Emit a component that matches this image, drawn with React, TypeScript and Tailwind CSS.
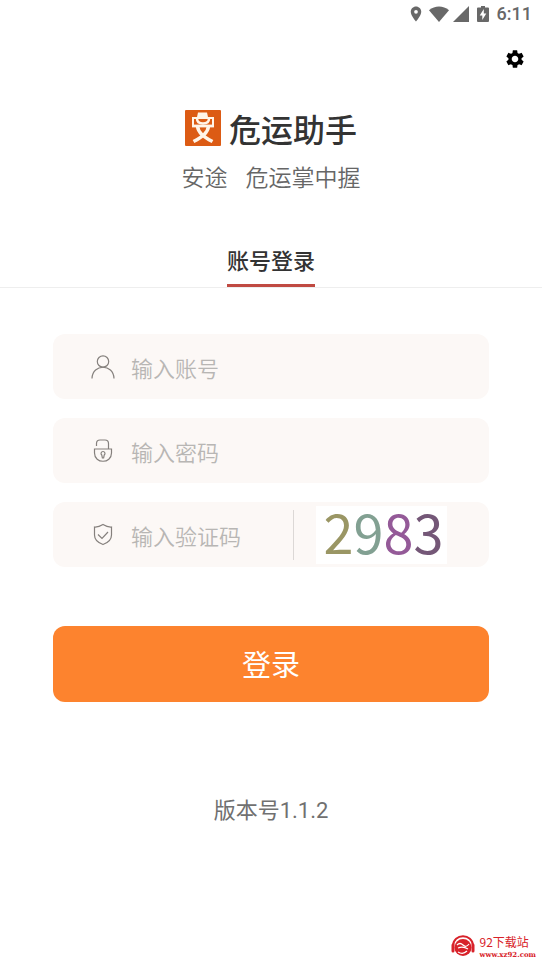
import { useState } from "react";
import type { ReactNode } from "react";
import { MdLocationOn, MdSettings } from "react-icons/md";

function StatusBar() {
  return (
    <div className="flex h-7 items-center justify-end pr-[10px] text-[#686868]">
      <MdLocationOn className="size-[18px]" aria-hidden="true" />
      <svg className="ml-1 h-4 w-5" viewBox="0 0 20 16" fill="currentColor" aria-hidden="true">
        <path d="M10 16 0 4.200C6 -.7 14 -.7 20 4.200Z" />
      </svg>
      <svg className="ml-1 size-4" viewBox="0 0 16 16" fill="currentColor" aria-hidden="true">
        <path d="M16 0V16H0Z" />
      </svg>
      <svg className="ml-2 h-4 w-3" viewBox="0 0 12 16" aria-hidden="true">
        <path d="M4 0h4v1.500h3q1 0 1 1V15q0 1-1 1H1q-1 0-1-1V2.500q0-1 1-1h3Z" fill="currentColor" />
        <path d="M6.800 3 2.700 9.500h2.600V14l4-6.500H6.800Z" fill="#fff" />
      </svg>
      <span className="ml-2 font-['Roboto',sans-serif] text-lg font-medium leading-7">6:11</span>
    </div>
  );
}

function Logo() {
  return (
    <svg className="size-9" viewBox="0 0 36 36" aria-hidden="true">
      <rect width="36" height="36" rx="1" fill="#dc5b14" />
      <path d="M13 2.500h9l1 4.500H12Z" fill="#fff4e8" />
      <g fill="none" stroke="#fff4e8">
        <path d="M8 15V8h20v7" strokeWidth="2" />
        <path d="M12 8.500q0 5 6 5t6-5" strokeWidth="2.500" />
        <path d="M7 16h22" strokeWidth="2.800" />
        <path d="M12.500 16C13 23 19 27 27.500 31.500M23.500 16C23 23 17 27 8.500 31.500" strokeWidth="3.500" />
      </g>
    </svg>
  );
}

function UserIcon() {
  return (
    <svg className="size-6" viewBox="0 0 24 24" fill="none" stroke="#85807d" strokeWidth="1.200" aria-hidden="true">
      <circle cx="12" cy="6.500" r="5.700" />
      <path d="M1 23.500C1.500 8.500 22.500 8.500 23 23.500" />
    </svg>
  );
}

function LockIcon() {
  return (
    <svg className="size-6" viewBox="0 0 24 24" fill="none" stroke="#85807d" strokeWidth="1.200" aria-hidden="true">
      <path d="M5.500 7V4.500Q5.500 1 9 1h5q3.500 0 3.500 3.500V10M3.500 10h17v4c0 11-17 11-17 0Z" />
      <path d="M12 12.500a2 2 0 0 1 1.200 3.600L12.600 19h-1.200l-.6-2.900A2 2 0 0 1 12 12.500Z" />
    </svg>
  );
}

function ShieldIcon() {
  return (
    <svg className="size-6" viewBox="0 0 24 24" fill="none" stroke="#85807d" strokeWidth="1.200" aria-hidden="true">
      <path d="M12 1.500Q7.500 4.300 3.500 4v8q0 6.500 8.500 9.500 8.500-3 8.500-9.500V4Q16.500 4.300 12 1.500Z" />
      <path d="m7 11.500 4 4 6-6.500" />
    </svg>
  );
}

type FieldProps = {
  id: string;
  label: string;
  type?: string;
  icon: ReactNode;
  children?: ReactNode;
};

function Field({ id, label, type = "text", icon, children }: FieldProps) {
  const [value, setValue] = useState("");
  return (
    <div className="flex h-[65px] items-center rounded-xl bg-[#fcf8f6] pl-[38px]">
      <label htmlFor={id} aria-label={label} className="mr-4 shrink-0">
        {icon}
      </label>
      <input
        id={id}
        type={type}
        value={value}
        placeholder={label}
        onChange={(event) => setValue(event.target.value)}
        className="h-full min-w-0 flex-1 bg-transparent text-[22px] font-[350] text-[#555] outline-none placeholder:text-[#b8b6b4]"
      />
      {children}
    </div>
  );
}

function Captcha() {
  return (
    <>
      <div className="h-[50px] w-px shrink-0 bg-[#dcd8d6]" />
      <button
        type="button"
        className="ml-[22px] mr-[42px] flex h-[58px] w-[131px] shrink-0 items-center justify-center bg-white pb-2 pl-1 text-[54px] leading-none"
      >
        <span className="text-[#9a9664]">2</span>
        <span className="text-[#82a092]">9</span>
        <span className="text-[#945a98]">8</span>
        <span className="text-[#745777]">3</span>
      </button>
    </>
  );
}

function Watermark() {
  return (
    <footer className="mt-auto flex items-center justify-end gap-1 pb-[5px] pr-[6px] text-[#d8222a]">
      <svg className="h-6 w-[26px]" viewBox="0 0 26 24" fill="none" stroke="currentColor" aria-hidden="true">
        <path d="M3 12C3-1 23-1 23 12" strokeWidth="2" />
        <path d="M3 11v6M23 11v6" strokeWidth="3" strokeLinecap="round" />
        <circle cx="13" cy="13.500" r="8.500" fill="currentColor" stroke="none" />
        <path d="M7 11q3-3 6 0t6-1M8 14q5-2 10 1M8 18q5 3 9-1" stroke="#fff" strokeWidth="1.200" />
      </svg>
      <div>
        <p className="text-xs leading-[18px]">92下载站</p>
        <p className="font-['DejaVu_Serif',serif] text-[7px] font-bold leading-2">www.xz92.com</p>
      </div>
    </footer>
  );
}

export default function App() {
  return (
    <div className="flex min-h-screen flex-col bg-white font-['Noto_Sans_CJK_SC',sans-serif]">
      <StatusBar />
      <header className="flex flex-col">
        <button type="button" aria-label="设置" className="mr-4 mt-5 self-end text-black">
          <MdSettings className="size-[22px]" />
        </button>
        <div className="mt-[38px] flex items-center justify-center gap-2">
          <Logo />
          <h1 className="text-[32px] font-medium leading-10 text-[#333]">危运助手</h1>
        </div>
        <p className="mt-3 flex justify-center gap-[18px] text-[23px] font-[350] leading-8 text-[#666]">
          <span>安途</span>
          <span>危运掌中握</span>
        </p>
      </header>
      <nav className="mt-[49px] flex justify-center border-b border-[#eee]">
        <button
          type="button"
          className="h-[46px] border-b-[3px] border-[#c04a42] pb-2 text-[22px] font-medium leading-8 text-[#333]"
        >
          账号登录
        </button>
      </nav>
      <form className="mt-[46px] flex flex-col gap-[19px] px-[53px]" onSubmit={(event) => event.preventDefault()}>
        <Field id="account" label="输入账号" icon={<UserIcon />} />
        <Field id="password" label="输入密码" type="password" icon={<LockIcon />} />
        <Field id="captcha" label="输入验证码" icon={<ShieldIcon />}>
          <Captcha />
        </Field>
        <button type="submit" className="mt-10 h-[76px] rounded-xl bg-[#fd832e] text-[29px] text-white">
          登录
        </button>
      </form>
      <p className="mt-[93px] text-center font-['Roboto','Noto_Sans_CJK_SC',sans-serif] text-[22px] leading-8 text-[#707070]">
        版本号1.1.2
      </p>
      <Watermark />
    </div>
  );
}
